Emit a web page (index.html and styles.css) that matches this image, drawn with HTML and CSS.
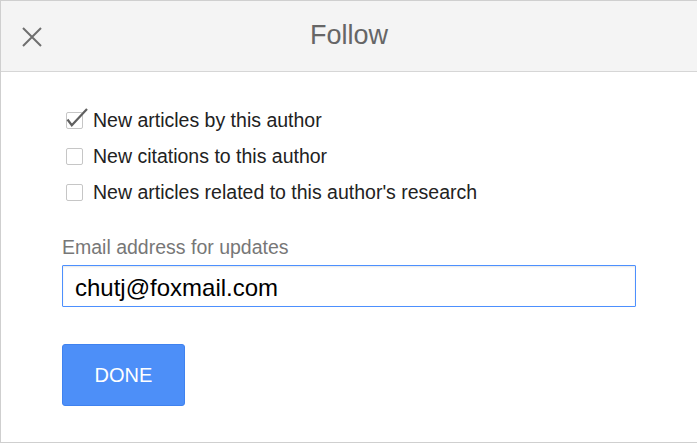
FILE: index.html
```html
<!DOCTYPE html>
<html lang="en">
<head>
    <meta charset="UTF-8">
    <meta name="viewport" content="width=device-width, initial-scale=1.0">
    <title>Follow</title>
    <link rel="stylesheet" href="styles.css">
</head>
<body>

    <div class="dialog">
        <div class="dialog-header">
            <button class="close-btn" aria-label="Close">
                <svg width="20" height="20" viewBox="0 0 20 20">
                    <path d="M1 1 L19 19 M19 1 L1 19" stroke="#6f6f6f" stroke-width="2" fill="none"/>
                </svg>
            </button>
            <h1>Follow</h1>
            <span></span>
        </div>

        <div class="dialog-body">
            <label class="check-row">
                <svg class="box" width="17" height="17" viewBox="0 0 17 17">
                    <rect x="0.5" y="0.5" width="16" height="16" rx="1.5" fill="#fff" stroke="#c6c6c6"/>
                    <path d="M1.5 7.5 L5.8 13.2 L21 -3" stroke="#606060" stroke-width="2.2" fill="none"/>
                </svg>
                New articles by this author
            </label>
            <label class="check-row">
                <svg class="box" width="17" height="17" viewBox="0 0 17 17">
                    <rect x="0.5" y="0.5" width="16" height="16" rx="1.5" fill="#fff" stroke="#c6c6c6"/>
                </svg>
                New citations to this author
            </label>
            <label class="check-row">
                <svg class="box" width="17" height="17" viewBox="0 0 17 17">
                    <rect x="0.5" y="0.5" width="16" height="16" rx="1.5" fill="#fff" stroke="#c6c6c6"/>
                </svg>
                New articles related to this author's research
            </label>

            <label class="email-label" for="email">Email address for updates</label>
            <input type="text" id="email" class="email-input" value="chutj@foxmail.com">

            <button class="done-btn">DONE</button>
        </div>
    </div>

</body>
</html>
```

FILE: styles.css
```css
body {
    margin: 0;
    font-family: "Liberation Sans", Arial, sans-serif;
    background-color: #fff;
}

.dialog {
    height: 441px;
    border: 1px solid #cfcfcf;
    border-right: none;
    overflow: hidden;
}

.dialog-header {
    display: grid;
    grid-template-columns: 1fr auto 1fr;
    align-items: center;
    height: 70px;
    background-color: #f4f4f4;
    border-bottom: 1px solid #d6d6d6;
}

.close-btn {
    justify-self: start;
    margin-left: 21px;
    margin-top: 2px;
    padding: 0;
    border: none;
    background: none;
    display: flex;
    cursor: pointer;
}

.dialog-header h1 {
    margin: 0 0 2px;
    font-size: 27px;
    font-weight: normal;
    color: #666;
    line-height: 30px;
}

.dialog-body {
    padding: 30px 0 0 61px;
}

.check-row {
    display: flex;
    align-items: center;
    height: 36px;
    font-size: 19.5px;
    color: #222;
}

.check-row .box {
    margin-left: 4px;
    margin-right: 10px;
    overflow: visible;
    flex-shrink: 0;
}

.email-label {
    display: block;
    margin-top: 25px;
    font-size: 19.5px;
    line-height: 24px;
    color: #777;
}

.email-input {
    display: block;
    box-sizing: border-box;
    width: 574px;
    height: 42px;
    margin-top: 6px;
    padding: 3px 12px 0;
    border: 1px solid #4d90fe;
    border-radius: 1px;
    font-family: "Liberation Sans", Arial, sans-serif;
    font-size: 24px;
    color: #000;
    outline: none;
    box-shadow: inset 0 1px 2px rgba(0, 0, 0, 0.1);
}

.done-btn {
    display: block;
    width: 123px;
    height: 62px;
    margin-top: 37px;
    background-color: #4d8ff8;
    border: 1px solid #3f82ef;
    border-radius: 3px;
    color: #fff;
    font-family: "Liberation Sans", Arial, sans-serif;
    font-size: 20px;
    cursor: pointer;
}
```
